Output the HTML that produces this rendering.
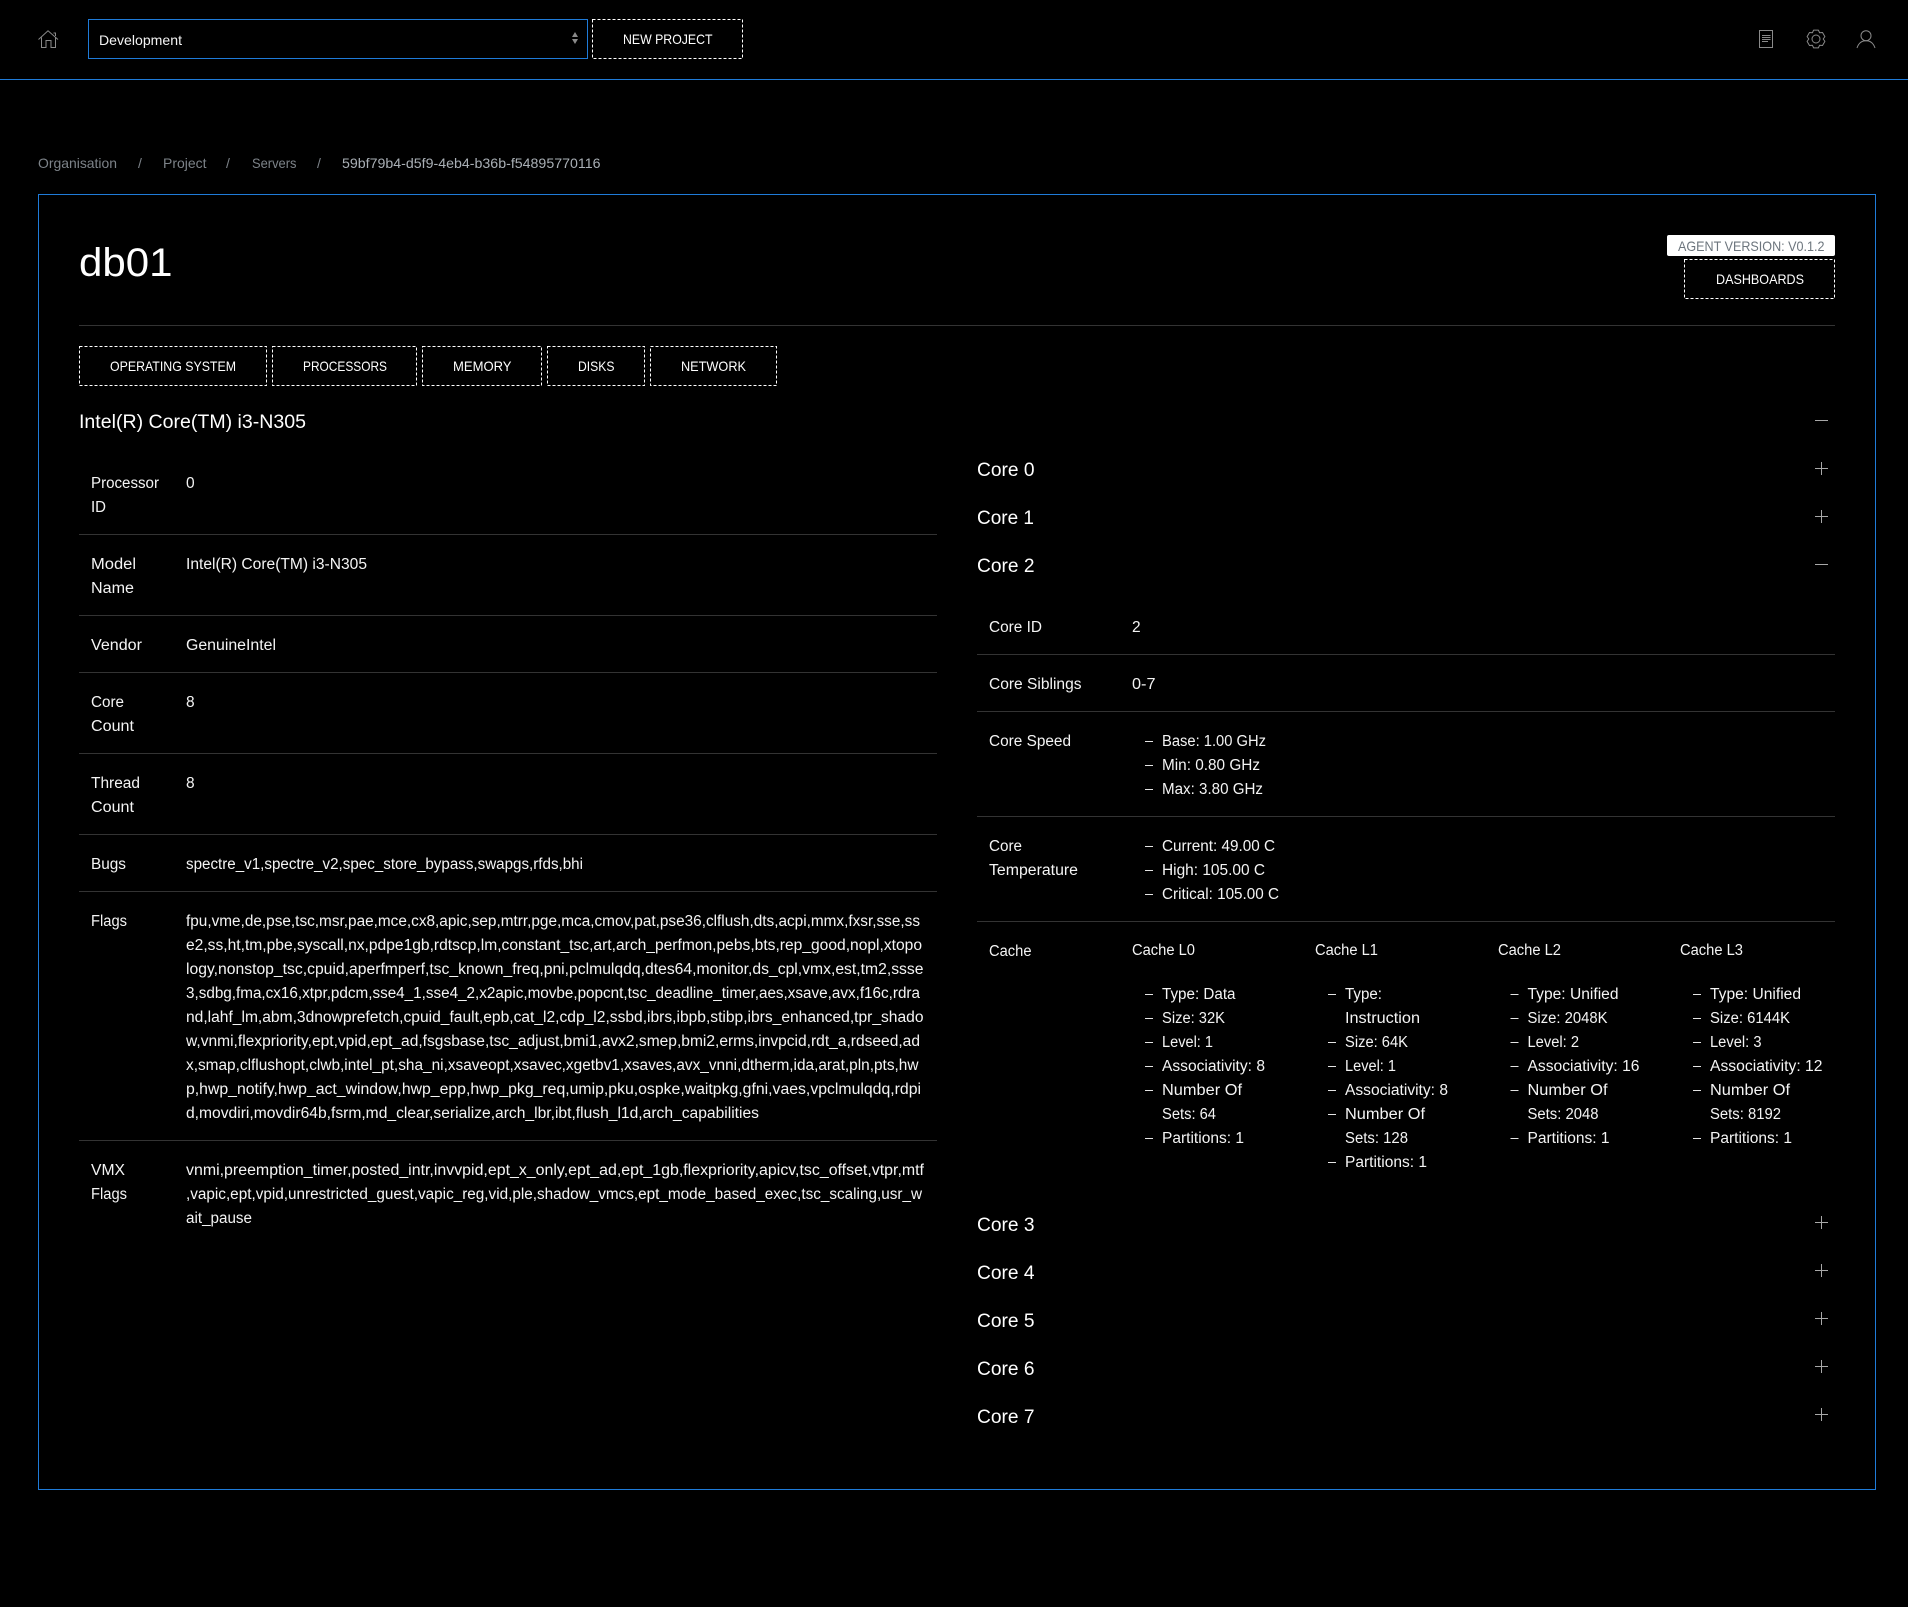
<!DOCTYPE html>
<html lang="en"><head><meta charset="utf-8"><title>db01</title>
<style>
html,body{margin:0;padding:0;background:#000;width:1908px;height:1607px;overflow:hidden}
svg{display:block}
text{font-family:"Liberation Sans",sans-serif;font-size:15.5px;fill:#f4f4f4}
.s{font-size:14px}
.h{font-size:19.5px;fill:#fff}
.b{font-size:14px;fill:#fff}
.g{font-size:14px;fill:#7d8389}
.u{font-size:14px;fill:#a9afb5}
.d{fill:none;stroke:#fff;stroke-dasharray:3 2}
.l{fill:#333}
.i{fill:none;stroke:#8a8a8a;stroke-width:1}
.p{fill:none;stroke:#a8a8a8;stroke-width:1}
.m{fill:none;stroke:#e4e4e4;stroke-width:1}
</style></head><body>
<svg width="1908" height="1607" viewBox="0 0 1908 1607" xmlns="http://www.w3.org/2000/svg">
<rect width="1908" height="1607" fill="#000"/>
<!-- Top bar -->
<rect x="0" y="79" width="1908" height="1" fill="#1f7bd8"/>
<path class="i" d="M38.5 39.5 48 30.8 58 39.5M41.5 37.5V47.5H46V40.5H51V47.5H55.5V37M53.5 33H55.5V36"/>
<rect x="88.5" y="19.5" width="499" height="39" fill="none" stroke="#1f7bd8" stroke-width="1"/>
<text class="s" x="99" y="45" textLength="83" lengthAdjust="spacingAndGlyphs">Development</text>
<path fill="#8a8a8a" d="M575 32 578 37H572ZM575 44 572 39H578Z"/>
<rect class="d" x="592.5" y="19.5" width="150" height="39"/>
<text class="b" x="623" y="44" textLength="89.500" lengthAdjust="spacingAndGlyphs">NEW PROJECT</text>
<rect class="i" x="1759.5" y="30.5" width="13" height="17"/>
<path class="i" d="M1762 35.500H1770.5M1762 37.500H1770.5M1762 39.500H1770.5M1762 41.500H1768"/>
<g transform="translate(1816 39)"><path class="i" stroke-linejoin="round" d="M-2.38-8.89 2.38-8.89 3.6-6.24 6.51-6.51 8.89-2.38 7.2 0 8.89 2.38 6.51 6.51 3.6 6.24 2.38 8.89-2.38 8.89-3.6 6.24-6.51 6.51-8.89 2.38-7.2 0-8.89-2.38-6.51-6.51-3.6-6.24Z"/><circle class="i" r="4"/></g>
<circle class="i" cx="1866" cy="35.7" r="5"/>
<path class="i" d="M1857 48C1858.5 43.5 1861.5 40.8 1866 40.8S1873.5 43.5 1875 48"/>
<!-- Breadcrumb -->
<text class="g" x="38" y="168" textLength="79" lengthAdjust="spacingAndGlyphs">Organisation</text>
<text class="g" x="138" y="168">/</text>
<text class="g" x="163" y="168" textLength="43.5" lengthAdjust="spacingAndGlyphs">Project</text>
<text class="g" x="226" y="168">/</text>
<text class="g" x="252" y="168" textLength="44.5" lengthAdjust="spacingAndGlyphs">Servers</text>
<text class="g" x="317" y="168">/</text>
<text class="u" x="342" y="168" textLength="258.5" lengthAdjust="spacingAndGlyphs">59bf79b4-d5f9-4eb4-b36b-f54895770116</text>
<!-- Panel -->
<rect x="38.5" y="194.5" width="1837" height="1295" fill="none" stroke="#1f7bd8"/>
<text x="79" y="276" style="font-size:40px;fill:#fff" textLength="93.500" lengthAdjust="spacingAndGlyphs">db01</text>
<rect x="1667" y="235" width="168" height="21" rx="2" fill="#fff"/>
<text x="1678" y="251" style="font-size:14px;fill:#6c757d" textLength="146.500" lengthAdjust="spacingAndGlyphs">AGENT VERSION: V0.1.2</text>
<rect class="d" x="1684.5" y="259.5" width="150" height="39"/>
<text class="b" x="1716" y="284" textLength="88" lengthAdjust="spacingAndGlyphs">DASHBOARDS</text>
<rect class="l" x="79" y="325" width="1756" height="1"/>
<!-- Tabs -->
<rect class="d" x="79.5" y="346.5" width="187" height="39"/>
<text class="b" x="110" y="371" textLength="126" lengthAdjust="spacingAndGlyphs">OPERATING SYSTEM</text>
<rect class="d" x="272.5" y="346.5" width="144" height="39"/>
<text class="b" x="303" y="371" textLength="84" lengthAdjust="spacingAndGlyphs">PROCESSORS</text>
<rect class="d" x="422.5" y="346.5" width="119" height="39"/>
<text class="b" x="453" y="371" textLength="58.5" lengthAdjust="spacingAndGlyphs">MEMORY</text>
<rect class="d" x="547.5" y="346.5" width="97" height="39"/>
<text class="b" x="578" y="371" textLength="36.500" lengthAdjust="spacingAndGlyphs">DISKS</text>
<rect class="d" x="650.5" y="346.5" width="126" height="39"/>
<text class="b" x="681" y="371" textLength="65" lengthAdjust="spacingAndGlyphs">NETWORK</text>
<!-- Heading -->
<text class="h" x="79" y="428" textLength="227" lengthAdjust="spacingAndGlyphs">Intel(R) Core(TM) i3-N305</text>
<path class="p" d="M1815 420.5H1828"/>
<!-- Left table -->
<text x="91" y="488" textLength="68" lengthAdjust="spacingAndGlyphs">Processor</text>
<text x="91" y="512" textLength="15" lengthAdjust="spacingAndGlyphs">ID</text>
<text x="186" y="488">0</text>
<rect class="l" x="79" y="534" width="858" height="1"/>
<text x="91" y="569" textLength="45" lengthAdjust="spacingAndGlyphs">Model</text>
<text x="91" y="593" textLength="43" lengthAdjust="spacingAndGlyphs">Name</text>
<text x="186" y="569" textLength="181" lengthAdjust="spacingAndGlyphs">Intel(R) Core(TM) i3-N305</text>
<rect class="l" x="79" y="615" width="858" height="1"/>
<text x="91" y="650" textLength="51" lengthAdjust="spacingAndGlyphs">Vendor</text>
<text x="186" y="650" textLength="90" lengthAdjust="spacingAndGlyphs">GenuineIntel</text>
<rect class="l" x="79" y="672" width="858" height="1"/>
<text x="91" y="707" textLength="33" lengthAdjust="spacingAndGlyphs">Core</text>
<text x="91" y="731" textLength="43" lengthAdjust="spacingAndGlyphs">Count</text>
<text x="186" y="707">8</text>
<rect class="l" x="79" y="753" width="858" height="1"/>
<text x="91" y="788" textLength="49" lengthAdjust="spacingAndGlyphs">Thread</text>
<text x="91" y="812" textLength="43" lengthAdjust="spacingAndGlyphs">Count</text>
<text x="186" y="788">8</text>
<rect class="l" x="79" y="834" width="858" height="1"/>
<text x="91" y="869" textLength="35" lengthAdjust="spacingAndGlyphs">Bugs</text>
<text x="186" y="869" textLength="397" lengthAdjust="spacingAndGlyphs">spectre_v1,spectre_v2,spec_store_bypass,swapgs,rfds,bhi</text>
<rect class="l" x="79" y="891" width="858" height="1"/>
<text x="91" y="926" textLength="36" lengthAdjust="spacingAndGlyphs">Flags</text>
<text x="186" y="926" textLength="734" lengthAdjust="spacingAndGlyphs">fpu,vme,de,pse,tsc,msr,pae,mce,cx8,apic,sep,mtrr,pge,mca,cmov,pat,pse36,clflush,dts,acpi,mmx,fxsr,sse,ss</text>
<text x="186" y="950" textLength="736" lengthAdjust="spacingAndGlyphs">e2,ss,ht,tm,pbe,syscall,nx,pdpe1gb,rdtscp,lm,constant_tsc,art,arch_perfmon,pebs,bts,rep_good,nopl,xtopo</text>
<text x="186" y="974" textLength="737.500" lengthAdjust="spacingAndGlyphs">logy,nonstop_tsc,cpuid,aperfmperf,tsc_known_freq,pni,pclmulqdq,dtes64,monitor,ds_cpl,vmx,est,tm2,ssse</text>
<text x="186" y="998" textLength="734" lengthAdjust="spacingAndGlyphs">3,sdbg,fma,cx16,xtpr,pdcm,sse4_1,sse4_2,x2apic,movbe,popcnt,tsc_deadline_timer,aes,xsave,avx,f16c,rdra</text>
<text x="186" y="1022" textLength="737.500" lengthAdjust="spacingAndGlyphs">nd,lahf_lm,abm,3dnowprefetch,cpuid_fault,epb,cat_l2,cdp_l2,ssbd,ibrs,ibpb,stibp,ibrs_enhanced,tpr_shado</text>
<text x="186" y="1046" textLength="734" lengthAdjust="spacingAndGlyphs">w,vnmi,flexpriority,ept,vpid,ept_ad,fsgsbase,tsc_adjust,bmi1,avx2,smep,bmi2,erms,invpcid,rdt_a,rdseed,ad</text>
<text x="186" y="1070" textLength="732.5" lengthAdjust="spacingAndGlyphs">x,smap,clflushopt,clwb,intel_pt,sha_ni,xsaveopt,xsavec,xgetbv1,xsaves,avx_vnni,dtherm,ida,arat,pln,pts,hw</text>
<text x="186" y="1094" textLength="735" lengthAdjust="spacingAndGlyphs">p,hwp_notify,hwp_act_window,hwp_epp,hwp_pkg_req,umip,pku,ospke,waitpkg,gfni,vaes,vpclmulqdq,rdpi</text>
<text x="186" y="1118" textLength="573" lengthAdjust="spacingAndGlyphs">d,movdiri,movdir64b,fsrm,md_clear,serialize,arch_lbr,ibt,flush_l1d,arch_capabilities</text>
<rect class="l" x="79" y="1140" width="858" height="1"/>
<text x="91" y="1175" textLength="34" lengthAdjust="spacingAndGlyphs">VMX</text>
<text x="91" y="1199" textLength="36" lengthAdjust="spacingAndGlyphs">Flags</text>
<text x="186" y="1175" textLength="738" lengthAdjust="spacingAndGlyphs">vnmi,preemption_timer,posted_intr,invvpid,ept_x_only,ept_ad,ept_1gb,flexpriority,apicv,tsc_offset,vtpr,mtf</text>
<text x="186" y="1199" textLength="736" lengthAdjust="spacingAndGlyphs">,vapic,ept,vpid,unrestricted_guest,vapic_reg,vid,ple,shadow_vmcs,ept_mode_based_exec,tsc_scaling,usr_w</text>
<text x="186" y="1223" textLength="66" lengthAdjust="spacingAndGlyphs">ait_pause</text>
<!-- Right accordion -->
<text class="h" x="977" y="476" textLength="57.5" lengthAdjust="spacingAndGlyphs">Core 0</text>
<path class="p" d="M1821.5 462V475M1815 468.5H1828"/>
<text class="h" x="977" y="524" textLength="57" lengthAdjust="spacingAndGlyphs">Core 1</text>
<path class="p" d="M1821.5 510V523M1815 516.5H1828"/>
<text class="h" x="977" y="572" textLength="57.5" lengthAdjust="spacingAndGlyphs">Core 2</text>
<path class="p" d="M1815 564.5H1828"/>
<text x="989" y="632" textLength="53" lengthAdjust="spacingAndGlyphs">Core ID</text>
<text x="1132" y="632">2</text>
<rect class="l" x="977" y="654" width="858" height="1"/>
<text x="989" y="689" textLength="92.5" lengthAdjust="spacingAndGlyphs">Core Siblings</text>
<text x="1132" y="689" textLength="23.5" lengthAdjust="spacingAndGlyphs">0-7</text>
<rect class="l" x="977" y="711" width="858" height="1"/>
<text x="989" y="746" textLength="82" lengthAdjust="spacingAndGlyphs">Core Speed</text>
<path class="m" d="M1145 741.500H1153M1145 765.500H1153M1145 789.500H1153"/>
<text x="1162" y="746" textLength="104" lengthAdjust="spacingAndGlyphs">Base: 1.00 GHz</text>
<text x="1162" y="770" textLength="98" lengthAdjust="spacingAndGlyphs">Min: 0.80 GHz</text>
<text x="1162" y="794" textLength="101" lengthAdjust="spacingAndGlyphs">Max: 3.80 GHz</text>
<rect class="l" x="977" y="816" width="858" height="1"/>
<text x="989" y="851" textLength="33" lengthAdjust="spacingAndGlyphs">Core</text>
<text x="989" y="875" textLength="89" lengthAdjust="spacingAndGlyphs">Temperature</text>
<path class="m" d="M1145 846.500H1153M1145 870.500H1153M1145 894.500H1153"/>
<text x="1162" y="851" textLength="113" lengthAdjust="spacingAndGlyphs">Current: 49.00 C</text>
<text x="1162" y="875" textLength="103" lengthAdjust="spacingAndGlyphs">High: 105.00 C</text>
<text x="1162" y="899" textLength="117" lengthAdjust="spacingAndGlyphs">Critical: 105.00 C</text>
<rect class="l" x="977" y="921" width="858" height="1"/>
<text x="989" y="956" textLength="42.5" lengthAdjust="spacingAndGlyphs">Cache</text>
<text x="1132" y="955" textLength="63" lengthAdjust="spacingAndGlyphs">Cache L0</text>
<text x="1315" y="955" textLength="63" lengthAdjust="spacingAndGlyphs">Cache L1</text>
<text x="1498" y="955" textLength="63" lengthAdjust="spacingAndGlyphs">Cache L2</text>
<text x="1680" y="955" textLength="63" lengthAdjust="spacingAndGlyphs">Cache L3</text>
<path class="m" d="M1145 994.500H1153M1145 1018.500H1153M1145 1042.500H1153M1145 1066.500H1153M1145 1090.500H1153M1145 1138.500H1153"/>
<text x="1162" y="999" textLength="73.5" lengthAdjust="spacingAndGlyphs">Type: Data</text>
<text x="1162" y="1023" textLength="63" lengthAdjust="spacingAndGlyphs">Size: 32K</text>
<text x="1162" y="1047" textLength="51" lengthAdjust="spacingAndGlyphs">Level: 1</text>
<text x="1162" y="1071" textLength="103" lengthAdjust="spacingAndGlyphs">Associativity: 8</text>
<text x="1162" y="1095" textLength="80" lengthAdjust="spacingAndGlyphs">Number Of</text>
<text x="1162" y="1119" textLength="54" lengthAdjust="spacingAndGlyphs">Sets: 64</text>
<text x="1162" y="1143" textLength="82" lengthAdjust="spacingAndGlyphs">Partitions: 1</text>
<path class="m" d="M1328 994.500H1336M1328 1042.500H1336M1328 1066.500H1336M1328 1090.500H1336M1328 1114.500H1336M1328 1162.500H1336"/>
<text x="1345" y="999" textLength="37" lengthAdjust="spacingAndGlyphs">Type:</text>
<text x="1345" y="1023" textLength="75" lengthAdjust="spacingAndGlyphs">Instruction</text>
<text x="1345" y="1047" textLength="63" lengthAdjust="spacingAndGlyphs">Size: 64K</text>
<text x="1345" y="1071" textLength="51" lengthAdjust="spacingAndGlyphs">Level: 1</text>
<text x="1345" y="1095" textLength="103" lengthAdjust="spacingAndGlyphs">Associativity: 8</text>
<text x="1345" y="1119" textLength="80" lengthAdjust="spacingAndGlyphs">Number Of</text>
<text x="1345" y="1143" textLength="63" lengthAdjust="spacingAndGlyphs">Sets: 128</text>
<text x="1345" y="1167" textLength="82" lengthAdjust="spacingAndGlyphs">Partitions: 1</text>
<path class="m" d="M1510.500 994.500H1518.500M1510.500 1018.500H1518.500M1510.500 1042.500H1518.500M1510.500 1066.500H1518.500M1510.500 1090.500H1518.500M1510.500 1138.500H1518.500"/>
<text x="1527.500" y="999" textLength="91" lengthAdjust="spacingAndGlyphs">Type: Unified</text>
<text x="1527.500" y="1023" textLength="80" lengthAdjust="spacingAndGlyphs">Size: 2048K</text>
<text x="1527.500" y="1047" textLength="51.500" lengthAdjust="spacingAndGlyphs">Level: 2</text>
<text x="1527.500" y="1071" textLength="112" lengthAdjust="spacingAndGlyphs">Associativity: 16</text>
<text x="1527.500" y="1095" textLength="80" lengthAdjust="spacingAndGlyphs">Number Of</text>
<text x="1527.500" y="1119" textLength="71" lengthAdjust="spacingAndGlyphs">Sets: 2048</text>
<text x="1527.500" y="1143" textLength="82" lengthAdjust="spacingAndGlyphs">Partitions: 1</text>
<path class="m" d="M1693 994.500H1701M1693 1018.500H1701M1693 1042.500H1701M1693 1066.500H1701M1693 1090.500H1701M1693 1138.500H1701"/>
<text x="1710" y="999" textLength="91" lengthAdjust="spacingAndGlyphs">Type: Unified</text>
<text x="1710" y="1023" textLength="80" lengthAdjust="spacingAndGlyphs">Size: 6144K</text>
<text x="1710" y="1047" textLength="51.500" lengthAdjust="spacingAndGlyphs">Level: 3</text>
<text x="1710" y="1071" textLength="112.500" lengthAdjust="spacingAndGlyphs">Associativity: 12</text>
<text x="1710" y="1095" textLength="80" lengthAdjust="spacingAndGlyphs">Number Of</text>
<text x="1710" y="1119" textLength="71" lengthAdjust="spacingAndGlyphs">Sets: 8192</text>
<text x="1710" y="1143" textLength="82" lengthAdjust="spacingAndGlyphs">Partitions: 1</text>
<text class="h" x="977" y="1231" textLength="57.5" lengthAdjust="spacingAndGlyphs">Core 3</text>
<path class="p" d="M1821.5 1216V1229M1815 1222.500H1828"/>
<text class="h" x="977" y="1279" textLength="57.5" lengthAdjust="spacingAndGlyphs">Core 4</text>
<path class="p" d="M1821.5 1264V1277M1815 1270.500H1828"/>
<text class="h" x="977" y="1327" textLength="57.5" lengthAdjust="spacingAndGlyphs">Core 5</text>
<path class="p" d="M1821.5 1312V1325M1815 1318.500H1828"/>
<text class="h" x="977" y="1375" textLength="57.5" lengthAdjust="spacingAndGlyphs">Core 6</text>
<path class="p" d="M1821.5 1360V1373M1815 1366.500H1828"/>
<text class="h" x="977" y="1423" textLength="57.5" lengthAdjust="spacingAndGlyphs">Core 7</text>
<path class="p" d="M1821.5 1408V1421M1815 1414.500H1828"/>
</svg>
</body></html>
